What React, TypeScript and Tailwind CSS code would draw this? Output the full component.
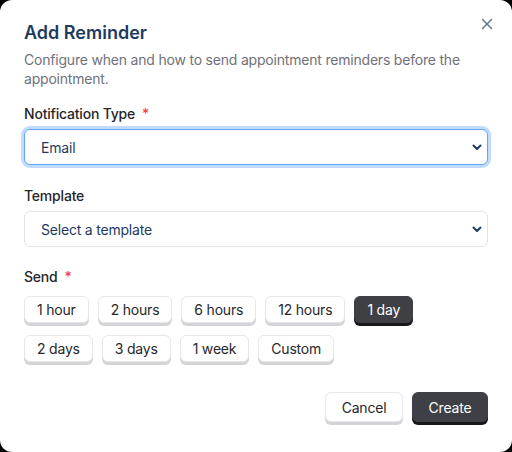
import React from "react";

const ChevronDown = () => (
  <svg width="12" height="12" viewBox="0 0 12 12" fill="none" className="text-[#1e3a5f]">
    <path d="M2.5 4.5L6 8L9.5 4.5" stroke="currentColor" strokeWidth="2" strokeLinecap="round" strokeLinejoin="round" />
  </svg>
);

const Chip = ({ label, active }: { label: string; active?: boolean }) => (
  <button
    className={
      active
        ? "h-[27px] px-3 rounded-md bg-[#3f3f46] text-white text-[14px] border border-[#3f3f46] shadow-[0_3px_0_#18181b]"
        : "h-[27px] px-3 rounded-md bg-white text-[#27272a] text-[14px] border border-[#e5e7eb] shadow-[0_3px_0_#d4d4d8]"
    }
  >
    {label}
  </button>
);

export default function App() {
  const row1 = ["1 hour", "2 hours", "6 hours", "12 hours", "1 day"];
  const row2 = ["2 days", "3 days", "1 week", "Custom"];
  return (
    <div
      className="w-[512px] h-[452px] bg-black tracking-[-0.2px]"
      style={{ fontFamily: "Inter, 'Noto Sans', sans-serif" }}
    >
      <div className="relative w-full h-full bg-white rounded-xl px-6 pt-[21px]">
        <button className="absolute right-[18px] top-[17px] text-[#64748b]">
          <svg width="14" height="14" viewBox="0 0 14 14" fill="none">
            <path d="M2.5 2.5L11.5 11.5M11.5 2.5L2.5 11.5" stroke="currentColor" strokeWidth="1.5" strokeLinecap="round" />
          </svg>
        </button>
        <h2 className="text-[18px] leading-[24px] font-semibold tracking-normal text-[#1e3a5f]">Add Reminder</h2>
        <p className="mt-[5px] text-[14px] leading-[19px] text-[#71717a]">
          Configure when and how to send appointment reminders before the appointment.
        </p>

        <div className="mt-[17px]">
          <div className="flex items-center text-[14px] leading-[18px] font-medium text-[#27272a]">
            Notification Type <span className="ml-[7px] text-[#ef4444]">*</span>
          </div>
          <div className="mt-[6px] h-[36px] rounded-md border border-[#60a5fa] ring-[3px] ring-[#bfdbfe] bg-white flex items-center justify-between pl-4 pr-[4px] text-[14px] text-[#1e3a5f]">
            <span>Email</span>
            <ChevronDown />
          </div>
        </div>

        <div className="mt-[22px]">
          <div className="text-[14px] leading-[18px] font-medium text-[#27272a]">Template</div>
          <div className="mt-[6px] h-[36px] rounded-md border border-[#e4e4e7] bg-white flex items-center justify-between pl-4 pr-[4px] text-[14px] text-[#1e3a5f]">
            <span>Select a template</span>
            <ChevronDown />
          </div>
        </div>

        <div className="mt-[21px]">
          <div className="flex items-center text-[14px] leading-[18px] font-medium text-[#27272a]">
            Send <span className="ml-[7px] text-[#ef4444]">*</span>
          </div>
          <div className="mt-[10px] flex flex-wrap gap-x-[9px]">
            {row1.map((l) => (
              <Chip key={l} label={l} active={l === "1 day"} />
            ))}
          </div>
          <div className="mt-[12px] flex flex-wrap gap-x-[9px]">
            {row2.map((l) => (
              <Chip key={l} label={l} />
            ))}
          </div>
        </div>

        <div className="mt-[30px] flex justify-end gap-[9px]">
          <button className="h-[30px] w-[78px] rounded-md bg-white border border-[#e5e7eb] shadow-[0_3px_0_#d4d4d8] text-[14px] text-[#27272a]">
            Cancel
          </button>
          <button className="h-[30px] w-[76px] rounded-md bg-[#3f3f46] border border-[#3f3f46] shadow-[0_3px_0_#18181b] text-[14px] text-white">
            Create
          </button>
        </div>
      </div>
    </div>
  );
}
